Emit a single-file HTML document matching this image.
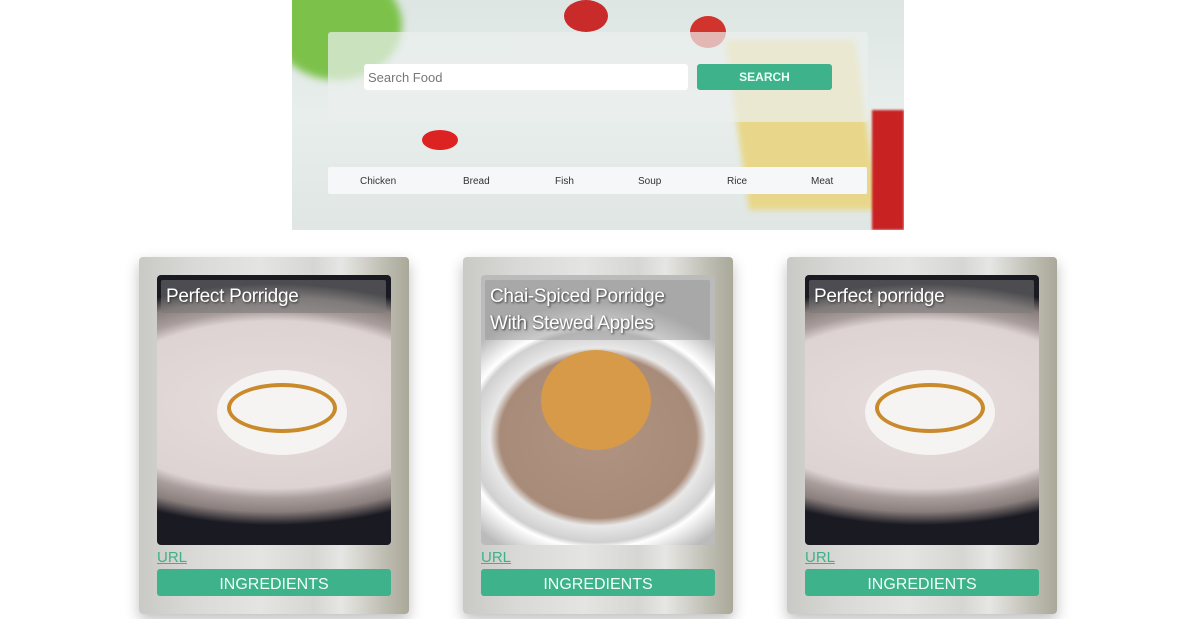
<!DOCTYPE html>
<html><head><style>
*{margin:0;padding:0;box-sizing:border-box}
body{width:1189px;height:619px;background:#fff;font-family:"Liberation Sans",sans-serif;position:relative;overflow:hidden}
.hero{position:absolute;left:292px;top:0;width:612px;height:230px;background:linear-gradient(180deg,#dde6e3,#e8eeec 50%,#dfe6e4);overflow:hidden}
.blob{position:absolute;border-radius:50%}
.panel{position:absolute;left:328px;top:32px;width:540px;height:90px;background:rgba(235,240,238,.7);border-radius:3px}
.inp{position:absolute;left:364px;top:64px;width:324px;height:26px;background:#fff;border-radius:3px;font-size:13px;color:#777;padding:6px 4px}
.sbtn{position:absolute;left:697px;top:64px;width:135px;height:26px;background:#3eb28a;border-radius:3px;color:#eafff5;font-size:12px;font-weight:bold;text-align:center;line-height:26px}
.nav{position:absolute;left:328px;top:167px;width:539px;height:27px;background:#f6f7f8;border-radius:2px;font-size:10px;color:#333}
.nav span{position:absolute;top:9px}
.card{position:absolute;top:257px;width:270px;height:357px;border-radius:4px;background:linear-gradient(90deg,#c9c9c5 0%,#d9d9d7 20%,#e4e4e2 45%,#d6d6d3 65%,#e6e6e4 75%,#b5b3a6 95%,#aaa898 100%);box-shadow:0 6px 14px rgba(0,0,0,.25)}
.img{position:absolute;left:18px;top:18px;width:234px;height:270px;border-radius:4px;overflow:hidden}
.ttl{position:absolute;left:4px;top:5px;width:225px;background:rgba(120,120,120,.55);color:#fff;font-size:19px;padding:3px 5px;border-radius:2px;text-shadow:1px 1px 2px #333;line-height:27px;letter-spacing:-.3px}
.url{position:absolute;left:18px;top:292px;font-size:15px;color:#3eb28a;text-decoration:underline}
.ing{position:absolute;left:18px;top:312px;width:234px;height:27px;background:#3eb28a;border-radius:3px;color:#f0fff8;font-size:16px;text-align:center;line-height:31px}
.p1{background:radial-gradient(ellipse 150% 62% at 50% 48%,#e6dddd 0%,#ddd3d2 50%,#a99e9c 56%,#8a7f7d 64%,#1a1a22 72%),#111}
.p2{background:radial-gradient(ellipse 70% 50% at 50% 60%,#b09380 0%,#a88b79 60%,#e8e8e8 66%,#d0d0d0 78%,#fff 82%,#bbb 100%)}
</style></head><body>
<div class="hero">
<div class="blob" style="left:-20px;top:-30px;width:130px;height:110px;background:#7cc24a;filter:blur(4px)"></div>
<div class="blob" style="left:272px;top:0;width:44px;height:32px;background:#c92a2a"></div>
<div class="blob" style="left:398px;top:16px;width:36px;height:32px;background:#d0342c"></div>
<div class="blob" style="left:130px;top:130px;width:36px;height:20px;background:#d22"></div>
<div style="position:absolute;left:445px;top:40px;width:130px;height:170px;background:#e8d78a;transform:skewX(8deg);filter:blur(3px)"></div>
<div style="position:absolute;left:580px;top:110px;width:32px;height:120px;background:#c82222;filter:blur(1px)"></div>
</div>
<div class="panel"></div>
<div class="inp">Search Food</div>
<div class="sbtn">SEARCH</div>
<div class="nav"><span style="left:32px">Chicken</span><span style="left:135px">Bread</span><span style="left:227px">Fish</span><span style="left:310px">Soup</span><span style="left:399px">Rice</span><span style="left:483px">Meat</span></div>

<div class="card" style="left:139px"><div class="img p1"><div class="blob" style="left:60px;top:95px;width:130px;height:85px;background:#f6f4f2"></div><div class="blob" style="left:70px;top:108px;width:110px;height:50px;border:4px solid #c88a2a;background:transparent"></div><div class="ttl">Perfect Porridge</div></div><div class="url">URL</div><div class="ing">INGREDIENTS</div></div>
<div class="card" style="left:463px"><div class="img p2"><div class="blob" style="left:60px;top:75px;width:110px;height:100px;background:#d79a48"></div><div class="ttl" style="width:225px;background:rgba(150,150,150,.5)">Chai-Spiced Porridge With Stewed Apples</div></div><div class="url">URL</div><div class="ing">INGREDIENTS</div></div>
<div class="card" style="left:787px"><div class="img p1"><div class="blob" style="left:60px;top:95px;width:130px;height:85px;background:#f6f4f2"></div><div class="blob" style="left:70px;top:108px;width:110px;height:50px;border:4px solid #c88a2a;background:transparent"></div><div class="ttl">Perfect porridge</div></div><div class="url">URL</div><div class="ing">INGREDIENTS</div></div>
</body></html>
